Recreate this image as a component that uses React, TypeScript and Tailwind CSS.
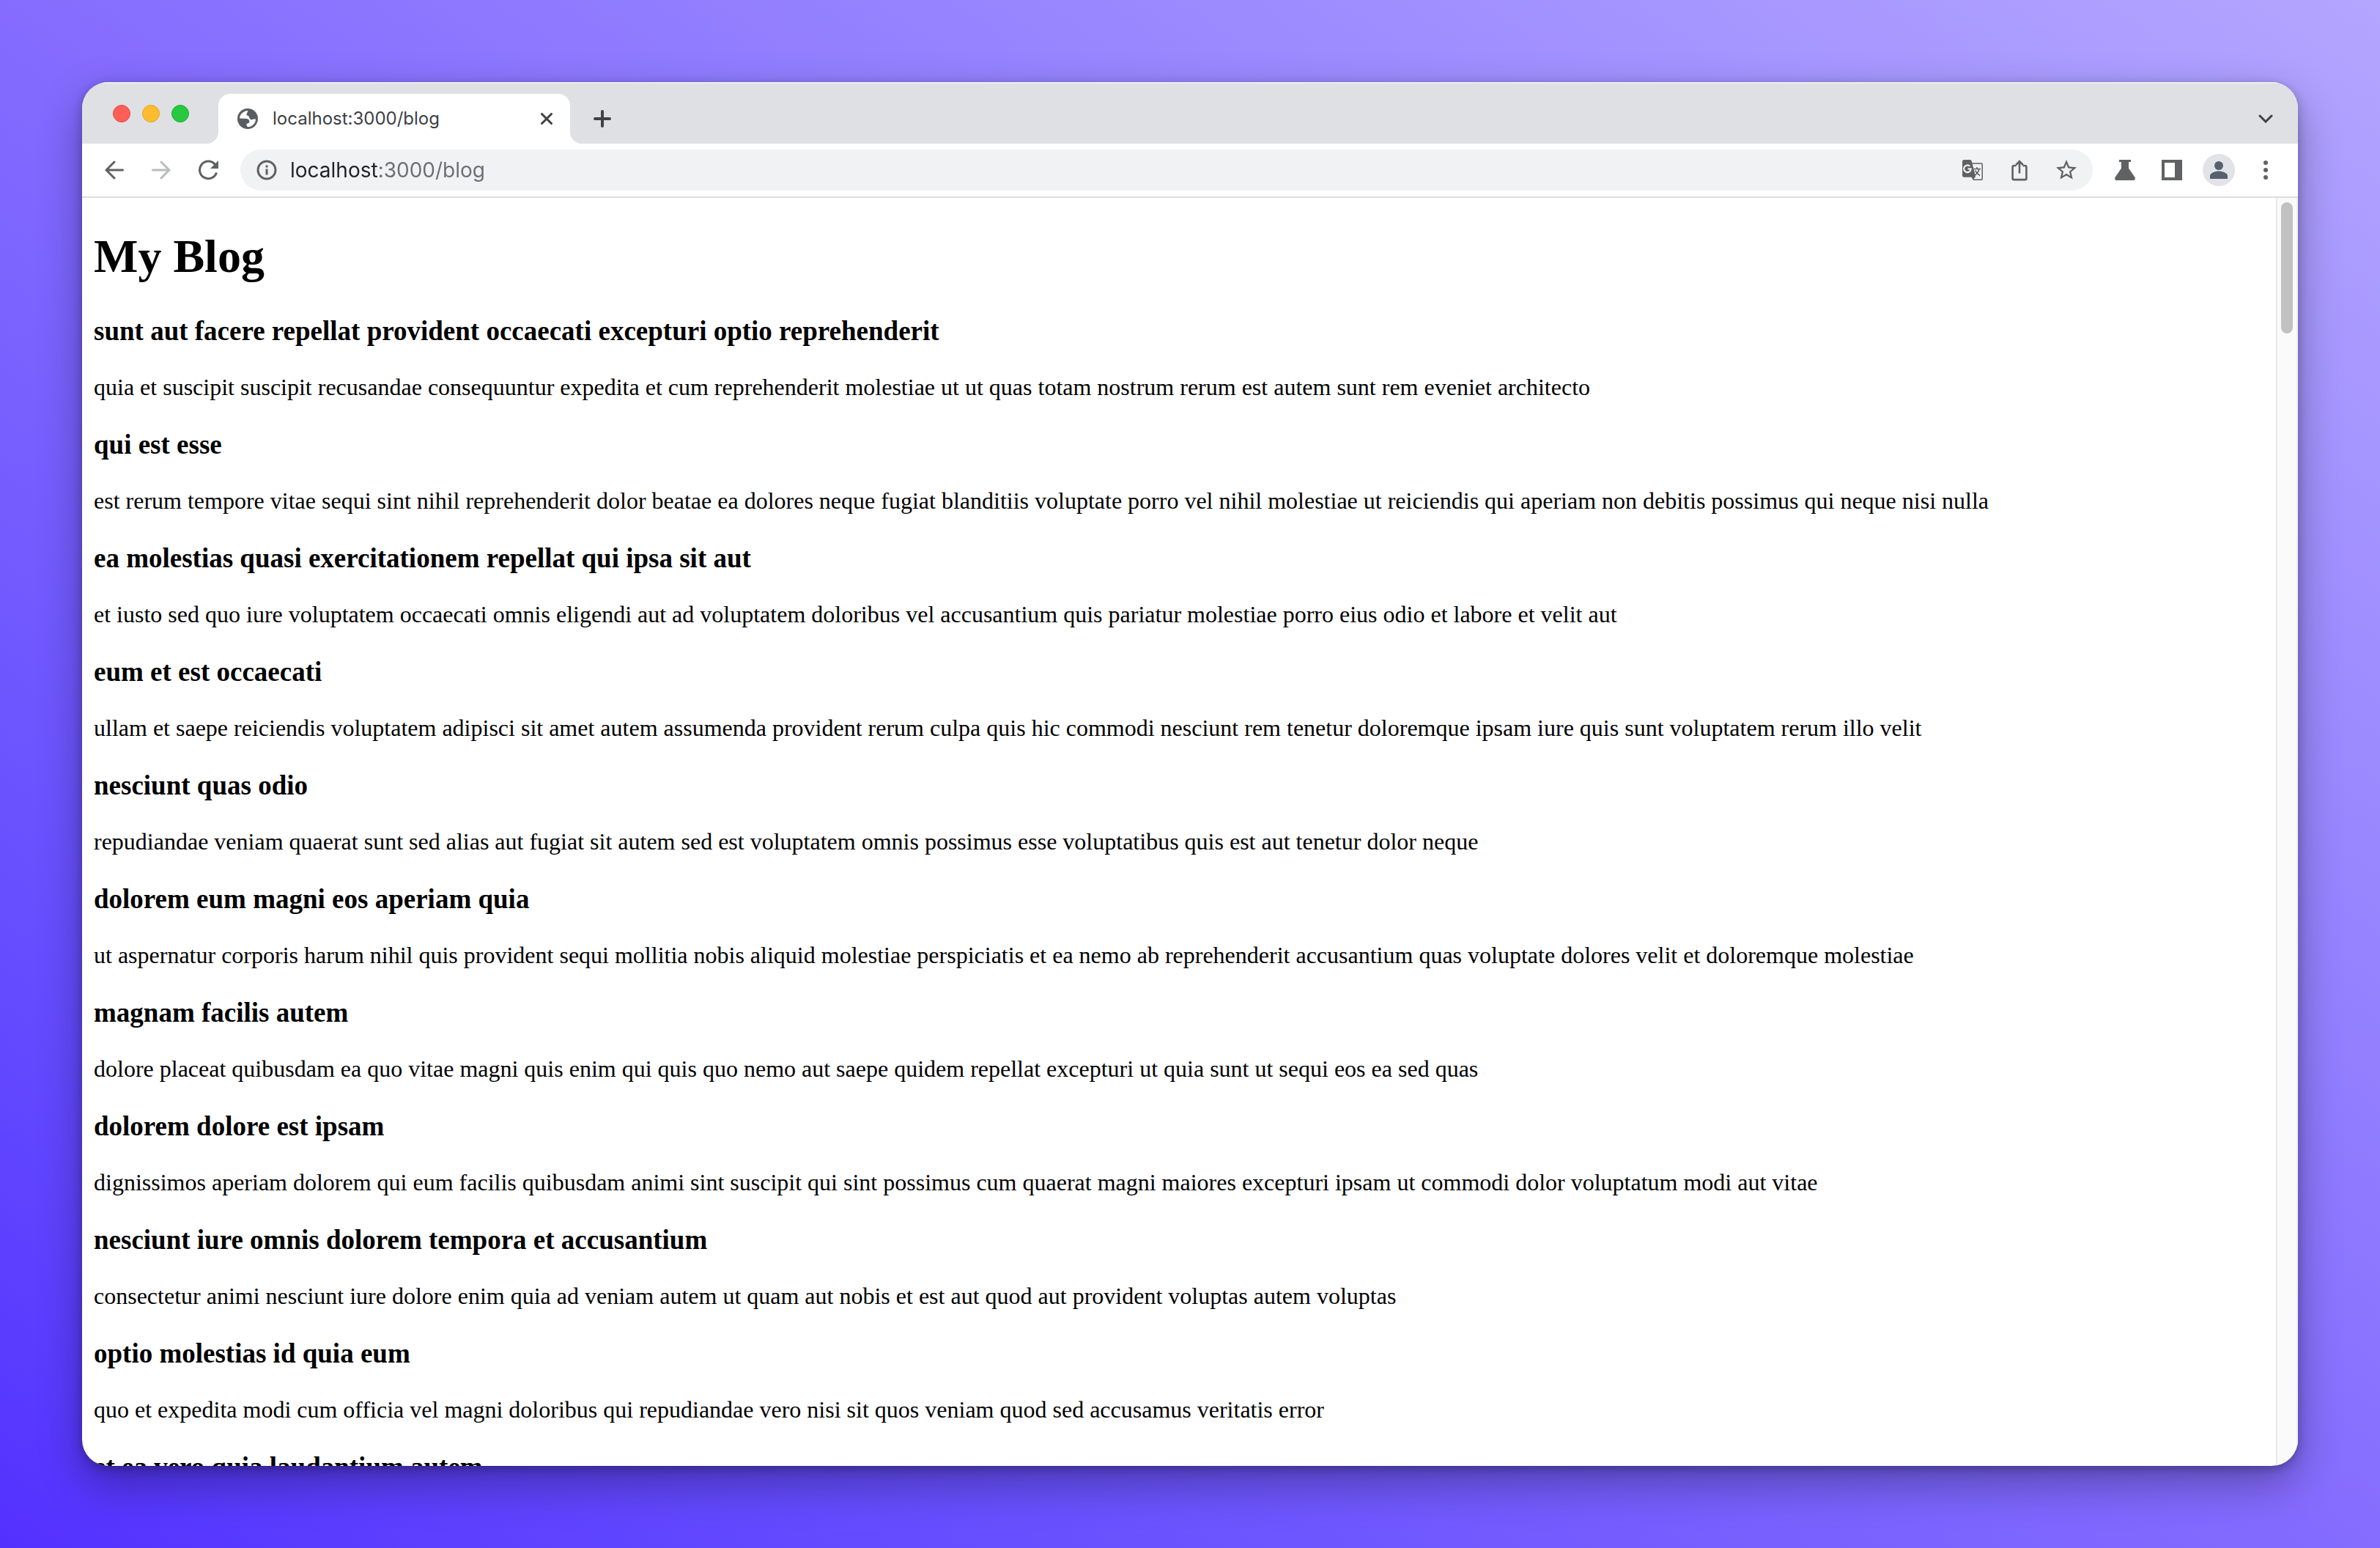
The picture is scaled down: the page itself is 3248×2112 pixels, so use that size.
import React from "react";

type Post = { title: string; body?: string };

const posts: Post[] = [
  { title: "sunt aut facere repellat provident occaecati excepturi optio reprehenderit", body: "quia et suscipit suscipit recusandae consequuntur expedita et cum reprehenderit molestiae ut ut quas totam nostrum rerum est autem sunt rem eveniet architecto" },
  { title: "qui est esse", body: "est rerum tempore vitae sequi sint nihil reprehenderit dolor beatae ea dolores neque fugiat blanditiis voluptate porro vel nihil molestiae ut reiciendis qui aperiam non debitis possimus qui neque nisi nulla" },
  { title: "ea molestias quasi exercitationem repellat qui ipsa sit aut", body: "et iusto sed quo iure voluptatem occaecati omnis eligendi aut ad voluptatem doloribus vel accusantium quis pariatur molestiae porro eius odio et labore et velit aut" },
  { title: "eum et est occaecati", body: "ullam et saepe reiciendis voluptatem adipisci sit amet autem assumenda provident rerum culpa quis hic commodi nesciunt rem tenetur doloremque ipsam iure quis sunt voluptatem rerum illo velit" },
  { title: "nesciunt quas odio", body: "repudiandae veniam quaerat sunt sed alias aut fugiat sit autem sed est voluptatem omnis possimus esse voluptatibus quis est aut tenetur dolor neque" },
  { title: "dolorem eum magni eos aperiam quia", body: "ut aspernatur corporis harum nihil quis provident sequi mollitia nobis aliquid molestiae perspiciatis et ea nemo ab reprehenderit accusantium quas voluptate dolores velit et doloremque molestiae" },
  { title: "magnam facilis autem", body: "dolore placeat quibusdam ea quo vitae magni quis enim qui quis quo nemo aut saepe quidem repellat excepturi ut quia sunt ut sequi eos ea sed quas" },
  { title: "dolorem dolore est ipsam", body: "dignissimos aperiam dolorem qui eum facilis quibusdam animi sint suscipit qui sint possimus cum quaerat magni maiores excepturi ipsam ut commodi dolor voluptatum modi aut vitae" },
  { title: "nesciunt iure omnis dolorem tempora et accusantium", body: "consectetur animi nesciunt iure dolore enim quia ad veniam autem ut quam aut nobis et est aut quod aut provident voluptas autem voluptas" },
  { title: "optio molestias id quia eum", body: "quo et expedita modi cum officia vel magni doloribus qui repudiandae vero nisi sit quos veniam quod sed accusamus veritatis error" },
  { title: "et ea vero quia laudantium autem" },
];

function IconButton({ label, children }: { label: string; children: React.ReactNode }) {
  return (
    <button type="button" aria-label={label} className="flex h-14 w-16 shrink-0 items-center justify-center text-[#5f6163]">
      {children}
    </button>
  );
}

function TabStrip() {
  return (
    <div className="flex h-[84px] shrink-0 items-end border-t-2 border-[#eeeef2] bg-[#dfe0e4]">
      <div className="flex h-[66px] w-[186px] shrink-0 items-center gap-4 pb-4 pl-[42px]">
        <button type="button" aria-label="Close window" className="size-6 rounded-full border border-[#e24b41] bg-[#ff5f57]" />
        <button type="button" aria-label="Minimize window" className="size-6 rounded-full border border-[#e1a325] bg-[#febc2e]" />
        <button type="button" aria-label="Zoom window" className="size-6 rounded-full border border-[#1fae33] bg-[#28c840]" />
      </div>
      <svg viewBox="0 0 16 16" className="-ml-4 size-4 shrink-0 fill-white" aria-hidden="true">
        <path d="M16 0V16H0A16 16 0 0 0 16 0Z" />
      </svg>
      <div className="flex h-[68px] w-[480px] shrink-0 items-center rounded-t-2xl bg-white pr-4 pl-[26px]">
        <svg viewBox="0 0 28 28" className="mr-4 size-7 shrink-0" aria-hidden="true">
          <circle cx="14" cy="14" r="14" fill="#5a5d61" />
          <path d="M3 13.500C3.200 8 8 3.200 14.500 3L13 6.500Q12 8 12.500 9Q14 9.500 15.500 10.500Q16.500 14.500 19 15.500L22 14.500H25C25 20 20.500 25 14 25.200L12.500 23V21L16 19.500Q17.500 17 14.500 14.500Q12.500 13.500 9 13.800Z" fill="#fff" />
        </svg>
        <span className="grow pl-1 font-['Inter',sans-serif] text-2xl text-[#3c4043]">localhost:3000/blog</span>
        <button type="button" aria-label="Close tab" className="flex size-8 items-center justify-center text-[#3f4145]">
          <svg viewBox="0 0 16 16" className="size-4" fill="none" stroke="currentColor" strokeWidth="3" strokeLinecap="round">
            <path d="M1.500 1.500 14.500 14.500M14.500 1.500 1.500 14.500" />
          </svg>
        </button>
      </div>
      <svg viewBox="0 0 16 16" className="size-4 shrink-0 fill-white" aria-hidden="true">
        <path d="M0 0V16H16A16 16 0 0 1 0 0Z" />
      </svg>
      <button type="button" aria-label="New tab" className="flex h-[68px] w-14 items-center justify-center text-[#3f4145]">
        <svg viewBox="0 0 24 24" className="size-6" fill="none" stroke="currentColor" strokeWidth="4" strokeLinecap="round">
          <path d="M12 2V22M2 12H22" />
        </svg>
      </button>
      <div className="grow" />
      <button type="button" aria-label="Search tabs" className="mr-3 flex h-[68px] w-16 items-center justify-center text-[#3f4145]">
        <svg viewBox="0 0 20 12" className="h-3 w-5" fill="none" stroke="currentColor" strokeWidth="3" strokeLinecap="round">
          <path d="M2 2 10 10 18 2" />
        </svg>
      </button>
    </div>
  );
}

function Toolbar() {
  return (
    <div className="flex h-[74px] shrink-0 items-center border-b-2 border-[#dcdddd] bg-white px-3">
      <IconButton label="Back">
        <svg viewBox="0 0 26 26" className="size-[26px]" fill="none" stroke="currentColor" strokeWidth="3" strokeLinecap="round">
          <path d="M24.500 13H2M13 2 2 13 13 24" />
        </svg>
      </IconButton>
      <IconButton label="Forward">
        <svg viewBox="0 0 26 26" className="size-[26px] text-[#b9bbbd]" fill="none" stroke="currentColor" strokeWidth="3" strokeLinecap="round">
          <path d="M1.500 13H24M13 2 24 13 13 24" />
        </svg>
      </IconButton>
      <IconButton label="Reload">
        <svg viewBox="0 0 28 28" className="size-7" fill="none" stroke="currentColor" strokeWidth="3">
          <path d="M25.500 17.500A11.800 11.800 0 1 1 23.500 6.500" />
          <path d="M28 1V12H17Z" fill="currentColor" stroke="none" />
        </svg>
      </IconButton>
      <div className="ml-3 flex h-14 grow items-center rounded-full bg-[#f0f2f4] pr-1 pl-[22px]">
        <button type="button" aria-label="View site information" className="mr-[18px] text-[#5f6163]">
          <svg viewBox="0 0 28 28" className="size-7" fill="none" stroke="currentColor" strokeWidth="3">
            <circle cx="14" cy="14" r="12" />
            <path d="M14 12.500V20.500M14 7.500V10.500" />
          </svg>
        </button>
        <input
          type="text"
          aria-label="Address and search bar"
          defaultValue="localhost:3000/blog"
          className="min-w-0 grow bg-linear-to-r from-[#202124] from-[121px] to-[#6b6d70] to-[121px] bg-clip-text font-['Inter',sans-serif] text-[28px] leading-9 text-transparent outline-none"
        />
        <IconButton label="Translate this page">
          <svg viewBox="0 0 28 28" className="size-7" fill="none" stroke="currentColor">
            <path d="M13 5H26Q27.200 5 27.200 6.200V26Q27.200 27.200 26 27.200H15.500L13 22" strokeWidth="1.500" />
            <path d="M2.500 0H10.500Q12.300 0 12.800 2L17.800 21.500V23.500L14.500 27L12.500 23.800H2.500Q0 23.800 0 21.300V2.500Q0 0 2.500 0Z" fill="currentColor" stroke="none" />
            <path d="M10.200 8.800A4.800 4.800 0 1 0 11.700 12.300H7.500" stroke="#f0f2f4" strokeWidth="2.200" />
            <path d="M15.500 12.500H25M20 10V12.500M23 12.500Q21.500 18.500 16.500 21.500M17.500 14.500Q19.500 19 24 21.500" strokeWidth="1.600" />
          </svg>
        </IconButton>
        <IconButton label="Share this page">
          <svg viewBox="0 0 28 28" className="size-7 overflow-visible" fill="none" stroke="currentColor" strokeWidth="2.600">
            <path d="M9.500 8H6.500Q4.600 8 4.600 9.900V25.200Q4.600 27.100 6.500 27.100H21.500Q23.400 27.100 23.400 25.200V9.900Q23.400 8 21.500 8H18.500" />
            <path d="M14 18.500V2.500M9.200 7 14 2.200 18.800 7" />
          </svg>
        </IconButton>
        <IconButton label="Bookmark this tab">
          <svg viewBox="2 2 20 20" className="size-7" fill="currentColor">
            <path d="M22 9.240l-7.190-.620L12 2 9.190 8.630 2 9.240l5.460 4.730L5.820 21 12 17.270 18.180 21l-1.630-7.030L22 9.240zM12 15.400l-3.760 2.270 1-4.280-3.320-2.880 4.380-.380L12 6.100l1.710 4.040 4.380.380-3.320 2.880 1 4.280L12 15.400z" />
          </svg>
        </IconButton>
      </div>
      <div className="ml-3 flex">
        <IconButton label="Experiments">
          <svg viewBox="0 0 28 28" className="size-7" fill="currentColor">
            <path d="M6 0H22V3H19V11.500L27.500 24Q28.600 26.500 26.500 28H1.500Q-.600 26.500 .500 24L9 11.500V3H6Z" />
          </svg>
        </IconButton>
        <IconButton label="Side panel">
          <svg viewBox="0 0 28 28" className="size-7" fill="currentColor">
            <path fillRule="evenodd" d="M0 0H28V28H0ZM4 4V24H18V4Z" />
          </svg>
        </IconButton>
        <IconButton label="Profile">
          <svg viewBox="0 0 44 44" className="size-11">
            <circle cx="22" cy="22" r="22" fill="#e1e3e6" />
            <circle cx="22" cy="16" r="6" fill="#56606f" />
            <path d="M10 34V30C10 26 17 23.500 22 23.500S34 26 34 30V34Z" fill="#56606f" />
          </svg>
        </IconButton>
        <IconButton label="Menu">
          <svg viewBox="0 0 28 28" className="size-7" fill="currentColor">
            <circle cx="14" cy="4" r="3" />
            <circle cx="14" cy="14" r="3" />
            <circle cx="14" cy="24" r="3" />
          </svg>
        </IconButton>
      </div>
    </div>
  );
}

export default function App() {
  return (
    <div className="flex h-screen flex-col bg-linear-to-tr from-[#5430ff] via-[#856cff] to-[#b4a5ff] p-28">
      <div className="flex min-h-0 grow flex-col overflow-hidden rounded-[36px] bg-white shadow-[0_24px_60px_rgba(0,0,0,0.32),0_4px_14px_rgba(0,0,0,0.25)]">
        <TabStrip />
        <Toolbar />
        <div className="flex min-h-0 grow">
          <main className="min-w-0 grow overflow-hidden px-4 font-['Liberation_Serif',serif] text-[32px] leading-[37px] text-black">
            <h1 className="my-[43px] text-[64px] leading-[74px] font-bold">My Blog</h1>
            {posts.map(({ title, body }) => (
              <article key={title}>
                <h2 className="mb-[37px] text-[37px] leading-[43px] font-bold">{title}</h2>
                {body && <p className="mb-[38px]">{body}</p>}
              </article>
            ))}
          </main>
          <div className="flex w-[30px] shrink-0 justify-center border-r-2 border-l-2 border-r-[#efefef] border-l-[#e8e8e8] bg-[#fafafa] pt-1.5">
            <div className="h-[179px] w-4 rounded-full bg-[#c1c1c1]" />
          </div>
        </div>
      </div>
    </div>
  );
}
